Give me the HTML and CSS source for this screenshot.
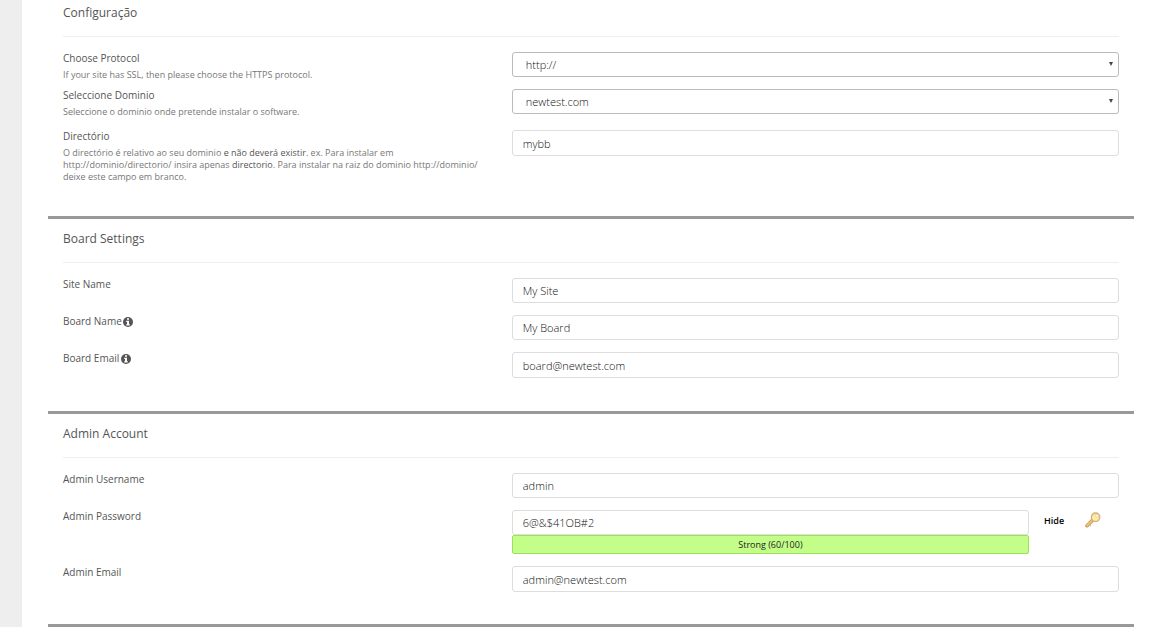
FILE: index.html
```
<!DOCTYPE html>
<html lang="pt">
<head>
	<meta charset="utf-8">
	<meta name="viewport" content="width=device-width, initial-scale=1.0">
	<title>MyBB</title>
	<link rel="stylesheet" href="styles.css">
</head>
<body>
	<form class="install">
		<section class="section">
			<h2 class="section-title">Configuração</h2>
			<div class="field field-help">
				<div class="field-text">
					<label class="label" for="protocol">Choose Protocol</label>
					<p class="help">If your site has SSL, then please choose the HTTPS protocol.</p>
				</div>
				<div class="select-box">
					<select class="input select" id="protocol">
						<option>http://</option>
					</select>
				</div>
			</div>
			<div class="field field-help">
				<div class="field-text">
					<label class="label" for="domain">Seleccione Dominio</label>
					<p class="help">Seleccione o dominio onde pretende instalar o software.</p>
				</div>
				<div class="select-box">
					<select class="input select" id="domain">
						<option>newtest.com</option>
					</select>
				</div>
			</div>
			<div class="field field-long">
				<div class="field-text">
					<label class="label" for="directory">Directório</label>
					<p class="help">O directório é relativo ao seu dominio <strong>e não deverá existir</strong>. ex. Para instalar em http://dominio/directorio/ insira apenas <strong>directorio</strong>. Para instalar na raiz do dominio http://dominio/ deixe este campo em branco.</p>
				</div>
				<input class="input" type="text" id="directory" value="mybb">
			</div>
		</section>

		<section class="section">
			<h2 class="section-title">Board Settings</h2>
			<div class="field">
				<label class="label" for="site-name">Site Name</label>
				<input class="input" type="text" id="site-name" value="My Site">
			</div>
			<div class="field">
				<label class="label" for="board-name">Board Name
					<svg class="info" viewBox="0 0 10 10"><circle cx="5" cy="5" r="5"/><path d="M4 1.3h2v1.5H4zM3.2 3.8H6v3.4h.8v1.2H3.2V7.2H4V5h-.8z"/></svg>
				</label>
				<input class="input" type="text" id="board-name" value="My Board">
			</div>
			<div class="field">
				<label class="label" for="board-email">Board Email
					<svg class="info" viewBox="0 0 10 10"><circle cx="5" cy="5" r="5"/><path d="M4 1.3h2v1.5H4zM3.2 3.8H6v3.4h.8v1.2H3.2V7.2H4V5h-.8z"/></svg>
				</label>
				<input class="input" type="text" id="board-email" value="board@newtest.com">
			</div>
		</section>

		<section class="section">
			<h2 class="section-title">Admin Account</h2>
			<div class="field">
				<label class="label" for="admin-username">Admin Username</label>
				<input class="input" type="text" id="admin-username" value="admin">
			</div>
			<div class="field">
				<label class="label" for="admin-password">Admin Password</label>
				<div class="password">
					<div class="password-main">
						<input class="input" type="text" id="admin-password" value="6@&amp;$41OB#2">
						<div class="strength">Strong (60/100)</div>
					</div>
					<div class="password-tools">
						<a class="hide" href="#">Hide</a>
						<button class="key" type="button" aria-label="Generate">
							<svg viewBox="0 0 16 16" width="16" height="16">
								<path d="M8.4 7.4L2 13.7" stroke="#cf9c62" stroke-width="3.6" stroke-linecap="round"/>
								<path d="M8.4 7.4L2.2 13.4" stroke="#edc67c" stroke-width="1.8" stroke-linecap="round"/>
								<path d="M4.6 13.1l1.2 1.1" stroke="#c99558" stroke-width="1"/>
								<circle cx="10.6" cy="5.2" r="4.3" fill="#f7df86" stroke="#d2a878" stroke-width="1.1"/>
								<circle cx="10.2" cy="5.7" r="2.7" fill="#fbeea8"/>
								<circle cx="12" cy="3.8" r="1.4" fill="#fff" stroke="#d8bc98" stroke-width=".5"/>
							</svg>
						</button>
					</div>
				</div>
			</div>
			<div class="field">
				<label class="label" for="admin-email">Admin Email</label>
				<input class="input" type="text" id="admin-email" value="admin@newtest.com">
			</div>
		</section>
		<hr class="end">
	</form>
</body>
</html>
```
FILE: styles.css
```
* {
	box-sizing: border-box;
}
body {
	margin: 0;
	border-left: 22px solid #eee;
	background-color: #fff;
	color: #555;
	font-family: "Open Sans", sans-serif;
	font-size: 11px;
}
.install {
	margin: 0 18px 0 26px;
}
.section {
	padding: 10px 15px 33px;
	border-top: 3px solid #999;
}
.section:first-child {
	padding-top: 3px;
	border-top: 0;
}
.section:last-of-type {
	padding-bottom: 32px;
}
.section-title {
	margin: 0 0 15px;
	padding-bottom: 13px;
	border-bottom: 1px solid #eee;
	font-size: 12px;
	font-weight: 500;
	line-height: 20px;
}
.field {
	display: grid;
	grid-template-columns: 17fr 23fr;
	align-items: start;
	margin-bottom: 12px;
}
.field-help {
	margin-bottom: 8px;
}
.field-long {
	margin-top: 12px;
}
.field:last-child {
	margin-bottom: 0;
}
.field-text {
	padding-right: 30px;
}
.label {
	display: block;
	font-size: 10px;
	font-weight: 400;
	line-height: 13px;
}
.help {
	margin: 4px 0 0;
	color: #777;
	font-size: 9px;
	font-weight: 400;
	line-height: 12px;
}
.help strong {
	color: #555;
	font-weight: 500;
}
.info {
	width: 10px;
	height: 10px;
	margin-left: -1px;
	vertical-align: -2px;
	fill: #555;
}
.info path {
	fill: #fff;
}
.input {
	display: block;
	width: 100%;
	height: 25px;
	padding: 0 10px;
	border: 1px solid #ddd;
	border-radius: 3px;
	background-color: #fff;
	color: #111;
	font-family: inherit;
	font-size: 11px;
	font-weight: 300;
}
.field:last-child .input {
	height: 26px;
}
.select {
	padding: 0 13px;
	border-color: #bbb;
	appearance: none;
}
.select-box {
	position: relative;
}
.select-box::after {
	content: "";
	position: absolute;
	top: 10px;
	right: 6px;
	border: 2px solid transparent;
	border-top: 4px solid #444;
	border-bottom: 0;
	pointer-events: none;
}
.password {
	display: flex;
}
.password-main {
	flex: 1;
}
.strength {
	height: 19px;
	border: 1px solid #9be15a;
	border-radius: 2px;
	background-color: #c3ff88;
	color: #222;
	font-size: 9px;
	line-height: 17px;
	text-align: center;
}
.password-tools {
	display: flex;
	align-items: center;
	justify-content: space-between;
	width: 90px;
	height: 20px;
	padding: 0 18px 0 15px;
}
.hide {
	color: #000;
	font-size: 9px;
	font-weight: 600;
	text-decoration: none;
}
.key {
	padding: 0;
	border: 0;
	background: none;
	line-height: 0;
	cursor: pointer;
}
.end {
	margin: 0;
	border: 0;
	border-top: 3px solid #999;
}
```
